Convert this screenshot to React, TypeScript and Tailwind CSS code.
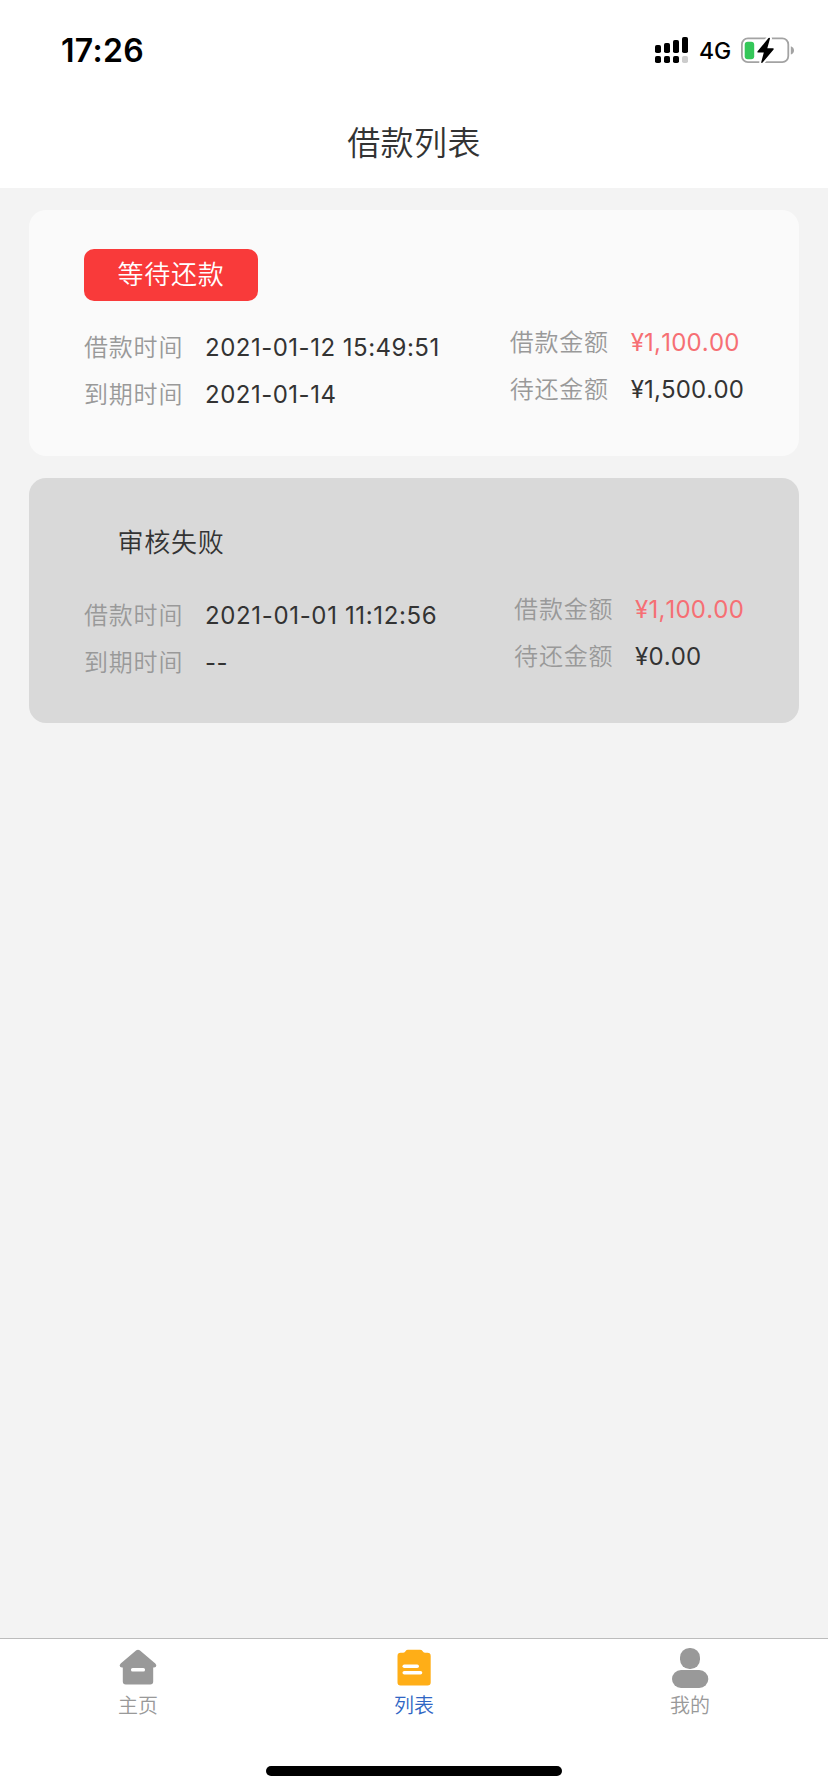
import type { ReactNode } from "react";
import clsx from "clsx";

type Loan = {
  status: string;
  active: boolean;
  borrowedAt: string;
  dueAt: string;
  amount: string;
  outstanding: string;
};

const loans: Loan[] = [
  {
    status: "等待还款",
    active: true,
    borrowedAt: "2021-01-12 15:49:51",
    dueAt: "2021-01-14",
    amount: "¥1,100.00",
    outstanding: "¥1,500.00",
  },
  {
    status: "审核失败",
    active: false,
    borrowedAt: "2021-01-01 11:12:56",
    dueAt: "--",
    amount: "¥1,100.00",
    outstanding: "¥0.00",
  },
];

function SignalIcon() {
  return (
    <svg width="34" height="28" viewBox="0 0 34 28">
      <rect x="0" y="9" width="6" height="8" rx="1.8" />
      <rect x="9" y="7" width="6" height="10" rx="1.8" />
      <rect x="18" y="4" width="6" height="13" rx="1.8" />
      <rect x="27" y="1" width="6" height="16" rx="1.8" />
      <rect x="0" y="20" width="6" height="7" rx="1.8" />
      <rect x="9" y="20" width="6" height="7" rx="1.8" />
      <rect x="18" y="20" width="6" height="7" rx="1.8" />
      <rect x="27" y="20" width="6" height="7" rx="1.8" fill="#cccccc" />
    </svg>
  );
}

function BatteryIcon() {
  return (
    <svg width="56" height="30" viewBox="0 0 56 30">
      <rect x="1.9" y="3.4" width="46.4" height="23.7" rx="6" fill="none" stroke="#a3a3a3" strokeWidth="1.8" />
      <path d="M50.8 11.2c2 .7 3.2 2.2 3.2 4.2s-1.2 3.5-3.2 4.2z" fill="#a3a3a3" />
      <rect x="4.7" y="6.8" width="9.5" height="17.4" rx="3" fill="#34c759" />
      <path
        d="M28.5 3 17.6 16.3q-.7 1.2.7 1.2h5.5L21.2 27.2q0 1.3 1.2.5L33.6 14.5q.6-1.2-.7-1.2h-5.6L30 3.5q-.1-1.4-1.5-.5z"
        fill="#000"
        stroke="#fff"
        strokeWidth="4"
        paintOrder="stroke"
      />
    </svg>
  );
}

function StatusBar() {
  return (
    <div className="flex h-[100px] items-center justify-between pr-8 pl-[61px]">
      <span className="pt-px text-[32px] leading-none font-semibold tracking-[0.3px]">17:26</span>
      <div className="flex items-center">
        <SignalIcon />
        <span className="ml-[10px] w-[41px] pt-0.5 text-[23px] leading-none font-medium">4G</span>
        <BatteryIcon />
      </div>
    </div>
  );
}

function Field({ label, value, className }: { label: string; value: string; className?: string }) {
  return (
    <div className="flex h-[47px] items-center text-[24px] leading-none whitespace-nowrap">
      <span className="w-[121px] pt-px font-[350] tracking-[0.8px] text-[#999999]">{label}</span>
      <span className={clsx("pt-px [font-kerning:none]", className)}>{value}</span>
    </div>
  );
}

function LoanCard({ loan }: { loan: Loan }) {
  return (
    <div
      className={clsx(
        "rounded-[17px] pt-[39px] pr-[55px] pl-[55px]",
        loan.active ? "h-[246px] bg-[#fafafa]" : "h-[245px] bg-[#d9d9d9]",
      )}
    >
      <div
        className={clsx(
          "flex h-[52px] w-[174px] items-center justify-center rounded-[10px] text-[26px] leading-none font-[350] tracking-[0.8px]",
          loan.active ? "bg-[#f93a3a] text-white" : "text-[#333333]",
        )}
      >
        {loan.status}
      </div>
      <div className="flex justify-between">
        <div className="pt-[23px]">
          <Field
            label="借款时间"
            value={loan.borrowedAt}
            className={clsx("text-[#333333]", loan.active ? "tracking-[0.5px]" : "tracking-[0.65px]")}
          />
          <Field label="到期时间" value={loan.dueAt} className="tracking-[0.5px] text-[#333333]" />
        </div>
        <div className={loan.active ? "pt-[18px]" : "pt-[17px]"}>
          <Field label="借款金额" value={loan.amount} className="tracking-[0.2px] text-[#f66f74]" />
          <Field label="待还金额" value={loan.outstanding} className="tracking-[0.15px] text-[#333333]" />
        </div>
      </div>
    </div>
  );
}

function HomeIcon() {
  return (
    <svg width="40" height="40" viewBox="0 0 40 40">
      <path
        d="M18.3 2.3q1.7-1.3 3.4 0L37.3 15.6q1.8 1.8.6 3.2-.9.9-2.7.7V33.5q0 3-3 3H7.8q-3 0-3-3V19.5q-1.8.2-2.7-.7-1.2-1.4.6-3.2z"
        fill="#999999"
      />
      <rect x="13" y="20" width="14" height="3.6" rx="1.6" fill="#fff" />
    </svg>
  );
}

function ListIcon() {
  return (
    <svg width="40" height="40" viewBox="0 0 40 40">
      <path
        d="M13.5 1.8H26q1.8 0 2.5 1.2.8 1.8 2.500 1.800h2.500q3.200 0 3.200 3.200v26.400q0 3-3.200 3h-27q-3 0-3-3V8q0-3.200 3.200-3.200h2.500q1.700 0 2.500-1.800.6-1.200 2.300-1.200z"
        fill="#ffae17"
      />
      <rect x="8.5" y="16.5" width="16.5" height="3.6" rx="1.8" fill="#fff" />
      <rect x="8.5" y="23" width="19.8" height="3.6" rx="1.8" fill="#fff" />
    </svg>
  );
}

function UserIcon() {
  return (
    <svg width="40" height="40" viewBox="0 0 40 40" fill="#999999">
      <rect x="10" y="0" width="20" height="21" rx="9.5" />
      <rect x="2" y="22" width="36.3" height="18" rx="9" />
    </svg>
  );
}

function Tab({ icon, label, active }: { icon: ReactNode; label: string; active?: boolean }) {
  return (
    <div className="flex flex-1 flex-col items-center pt-[9px]">
      {icon}
      <span className={clsx("mt-2 text-[20px] leading-5 font-[350]", active ? "text-[#2f66c4]" : "text-[#999999]")}>
        {label}
      </span>
    </div>
  );
}

export default function App() {
  return (
    <div className="flex h-[1792px] w-[828px] flex-col overflow-hidden bg-[#f3f3f3] font-['Inter','Noto_Sans_CJK_SC',sans-serif]">
      <header className="h-[188px] bg-white text-black">
        <StatusBar />
        <h1 className="flex h-[86px] items-center justify-center text-[33px] leading-none font-[350] tracking-[0.4px] text-[#333333]">
          借款列表
        </h1>
      </header>

      <main className="flex flex-1 flex-col gap-[22px] px-[29px] pt-[22px]">
        {loans.map((loan) => (
          <LoanCard key={loan.borrowedAt} loan={loan} />
        ))}
      </main>

      <nav className="flex h-[154px] flex-col border-t border-[#bcbcbc] bg-white">
        <div className="flex h-[127px]">
          <Tab icon={<HomeIcon />} label="主页" />
          <Tab icon={<ListIcon />} label="列表" active />
          <Tab icon={<UserIcon />} label="我的" />
        </div>
        <div className="mx-auto h-[10px] w-[296px] rounded-full bg-black" />
      </nav>
    </div>
  );
}
